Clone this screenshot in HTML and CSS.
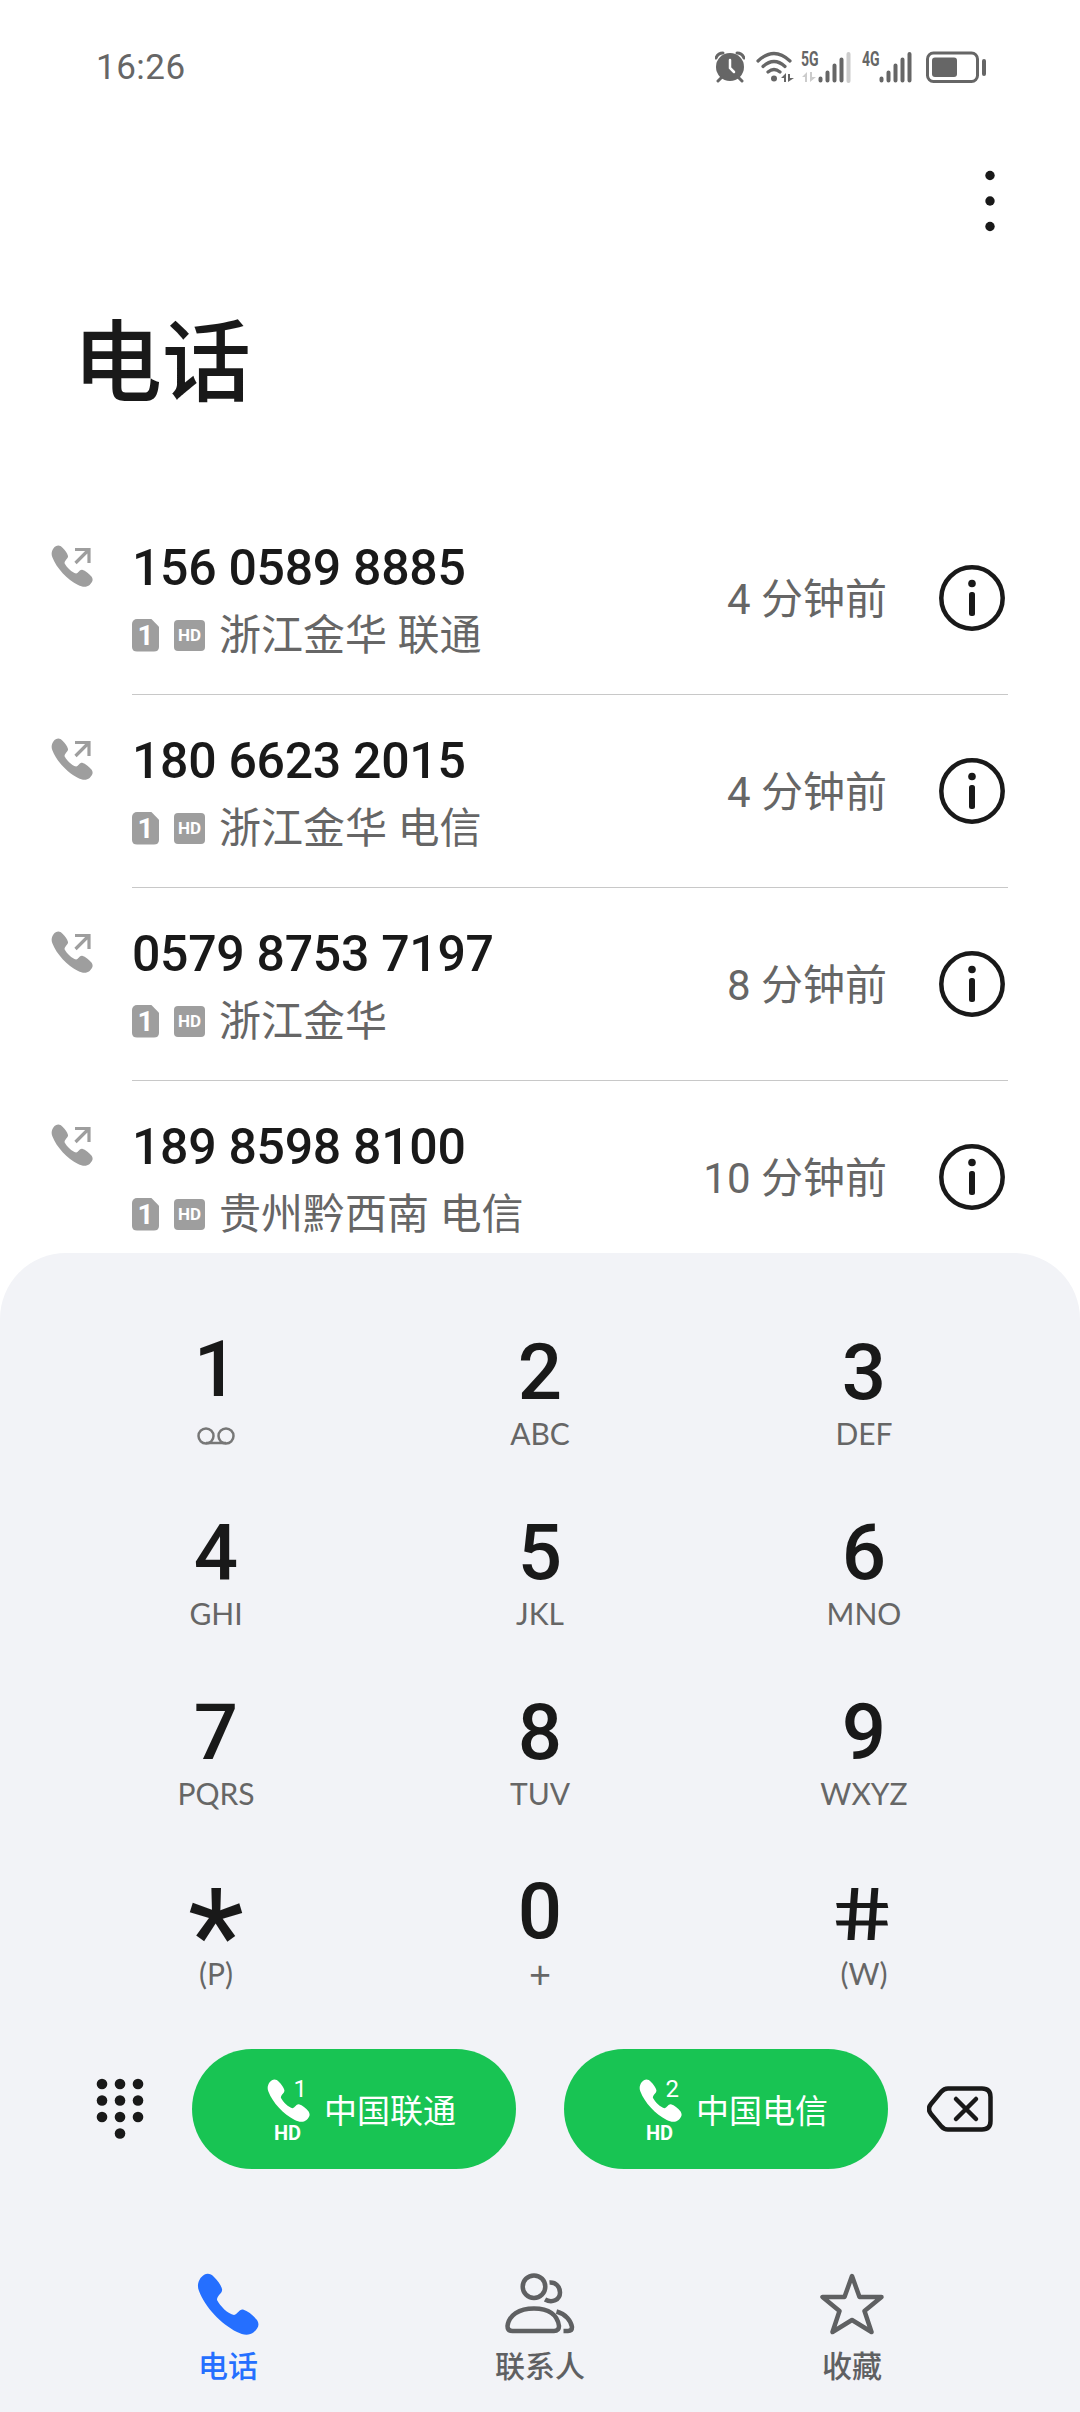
FILE: index.html
```html
<!DOCTYPE html>
<html lang="zh-CN">
<head>
  <meta charset="UTF-8" />
  <meta name="viewport" content="width=device-width, initial-scale=1" />
  <title>电话</title>
  <link rel="stylesheet" href="styles.css">
</head>
<body>
<!-- shared shapes -->
<svg class="defs" width="0" height="0">
  <symbol id="handset" viewBox="0 0 62 62">
    <path d="M3.500 5C8 -0.500 13 -0.500 17 4C21 8 24 12 25 16C26 20 20 22 20 27C23 33 31 41 37 42C41 41 42 36 46 36.500C51 38 56 42 60 47C63 52 61 55 57 59C52 63 46 62 40 59C24 51 8 34 2 18C0 13 1 9 3.500 5Z" />
  </symbol>
  <symbol id="outgoing" viewBox="0 0 42 42">
    <use href="#handset" width="42" height="42" />
    <path d="M24 4.500H38V18M37.500 5L24.500 18" fill="none" stroke="#9e9e9e" stroke-width="3.200" />
  </symbol>
  <symbol id="info" viewBox="0 0 66 66">
    <circle cx="33" cy="33" r="30.700" fill="none" stroke="#191919" stroke-width="4.500" />
    <circle cx="33" cy="18.500" r="3.800" />
    <rect x="30" y="27" width="6" height="24" rx="2.500" />
  </symbol>
</svg>

<header class="status">
  <span class="clock">16:26</span>
  <div class="indicators">
    <svg class="alarm" viewBox="0 0 30 32">
      <circle cx="15" cy="16" r="14" />
      <path d="M7 26L3 30M23 26L27 30" stroke="#666" stroke-width="3" stroke-linecap="round" />
      <path d="M1 7Q3 2 8 2M22 2Q27 2 29 7" fill="none" stroke="#666" stroke-width="3" stroke-linecap="round" />
      <path d="M15 9V17L19 21" fill="none" stroke="#fff" stroke-width="2.500" stroke-linecap="round" />
    </svg>
    <svg class="wifi" viewBox="0 0 38 32">
      <g fill="none" stroke="#666" stroke-width="3.200" stroke-linecap="round">
        <path d="M2 10Q18 -5 34 10M7 15.500Q18 5.500 29 15.500M12 21Q18 16 24 21" />
      </g>
      <circle cx="18" cy="27.500" r="3" />
      <path d="M25 27L30 22V31H28V27ZM32 23H34V27H38L32 31Z" />
    </svg>
    <div class="signal">
      <span>5G</span>
      <svg viewBox="0 0 50 32">
        <path d="M1 26L6 21V31H4V26ZM9 21H11V26H15L9 31Z" fill="#ccc" />
        <path d="M19.500 27.500V29.500M26.500 21.500V29.500M33.500 14.500V29.500M40.500 8.500V29.500" stroke="#666" stroke-width="4" stroke-linecap="round" />
        <path d="M47.500 3V30" stroke="#ccc" stroke-width="4" stroke-linecap="round" />
      </svg>
    </div>
    <div class="signal">
      <span>4G</span>
      <svg viewBox="0 0 50 32">
        <path d="M19.500 27.500V29.500M26.500 21.500V29.500M33.500 14.500V29.500M40.500 8.500V29.500M47.500 3V29.500" stroke="#666" stroke-width="4" stroke-linecap="round" />
      </svg>
    </div>
    <svg class="battery" viewBox="0 0 60 32">
      <rect x="1.500" y="2" width="50" height="28.500" rx="6" fill="none" stroke="#666" stroke-width="3" />
      <rect x="6" y="6.500" width="25" height="19.500" rx="3" />
      <rect x="56" y="8" width="4" height="17" rx="2" />
    </svg>
  </div>
</header>

<div class="toolbar">
  <svg class="more" viewBox="0 0 10 62">
    <circle cx="5" cy="5.500" r="4.700" />
    <circle cx="5" cy="31" r="4.700" />
    <circle cx="5" cy="56.500" r="4.700" />
  </svg>
</div>
<h1>电话</h1>

<ul class="calls">
  <li>
    <svg class="out"><use href="#outgoing" /></svg>
    <div class="entry">
      <div class="who">
        <p class="number">156 0589 8885</p>
        <p class="place"><span class="sim">1</span><span class="hd">HD</span>浙江金华 联通</p>
      </div>
      <span class="ago">4 分钟前</span>
      <svg class="info"><use href="#info" /></svg>
    </div>
  </li>
  <li>
    <svg class="out"><use href="#outgoing" /></svg>
    <div class="entry">
      <div class="who">
        <p class="number">180 6623 2015</p>
        <p class="place"><span class="sim">1</span><span class="hd">HD</span>浙江金华 电信</p>
      </div>
      <span class="ago">4 分钟前</span>
      <svg class="info"><use href="#info" /></svg>
    </div>
  </li>
  <li>
    <svg class="out"><use href="#outgoing" /></svg>
    <div class="entry">
      <div class="who">
        <p class="number">0579 8753 7197</p>
        <p class="place"><span class="sim">1</span><span class="hd">HD</span>浙江金华</p>
      </div>
      <span class="ago">8 分钟前</span>
      <svg class="info"><use href="#info" /></svg>
    </div>
  </li>
  <li>
    <svg class="out"><use href="#outgoing" /></svg>
    <div class="entry">
      <div class="who">
        <p class="number">189 8598 8100</p>
        <p class="place"><span class="sim">1</span><span class="hd">HD</span>贵州黔西南 电信</p>
      </div>
      <span class="ago">10 分钟前</span>
      <svg class="info"><use href="#info" /></svg>
    </div>
  </li>
</ul>

<section class="dialer">
  <div class="keys">
    <div class="key one"><b>1</b>
      <svg class="voicemail" viewBox="0 0 38 18">
        <path d="M9 16H29" />
        <circle cx="9" cy="9" r="7.500" />
        <circle cx="29" cy="9" r="7.500" />
      </svg>
    </div>
    <div class="key"><b>2</b><small>ABC</small></div>
    <div class="key"><b>3</b><small>DEF</small></div>
    <div class="key"><b>4</b><small>GHI</small></div>
    <div class="key"><b>5</b><small>JKL</small></div>
    <div class="key"><b>6</b><small>MNO</small></div>
    <div class="key"><b>7</b><small>PQRS</small></div>
    <div class="key"><b>8</b><small>TUV</small></div>
    <div class="key"><b>9</b><small>WXYZ</small></div>
    <div class="key"><b class="star">*</b><small>(P)</small></div>
    <div class="key zero"><b>0</b><small class="plus">+</small></div>
    <div class="key"><b class="hash">#</b><small>(W)</small></div>
  </div>

  <div class="actions">
    <svg class="grid" viewBox="0 0 48 62">
      <circle cx="6" cy="6" r="5.300" /><circle cx="24" cy="6" r="5.300" /><circle cx="42" cy="6" r="5.300" />
      <circle cx="6" cy="22.500" r="5.300" /><circle cx="24" cy="22.500" r="5.300" /><circle cx="42" cy="22.500" r="5.300" />
      <circle cx="6" cy="39" r="5.300" /><circle cx="24" cy="39" r="5.300" /><circle cx="42" cy="39" r="5.300" />
      <circle cx="24" cy="55.500" r="5.300" />
    </svg>
    <button class="call">
      <span class="line"><svg><use href="#handset" /></svg><sup>1</sup><em>HD</em></span>
      中国联通
    </button>
    <button class="call">
      <span class="line"><svg><use href="#handset" /></svg><sup>2</sup><em>HD</em></span>
      中国电信
    </button>
    <svg class="erase" viewBox="0 0 66 46">
      <path d="M21 2.500H55Q63.500 2.500 63.500 11V35Q63.500 43.500 55 43.500H21Q17 43.500 14 40L4 28Q0 23 4 18L14 6Q17 2.500 21 2.500Z" />
      <path d="M29 13L49 33M49 13L29 33" />
    </svg>
  </div>

  <nav class="tabs">
    <a class="active">
      <svg viewBox="0 0 62 62"><use href="#handset" /></svg>
      电话
    </a>
    <a>
      <svg class="people" viewBox="0 0 70 62">
        <circle cx="29" cy="13.700" r="11.300" />
        <path d="M2.500 53C4 42 14 35.500 29 35.500S52.500 42 54 53Q54 58 49 58H7.500Q2.500 58 2.500 53Z" />
        <g stroke-linecap="butt">
          <path d="M44.500 9.500C51 9 55 14 55 19.500C55 27 47 30.500 40 26.500" />
          <path d="M51.500 38.500C61 41 66 48 67 54Q67 58 63 58H58.500" />
        </g>
      </svg>
      联系人
    </a>
    <a>
      <svg viewBox="0 0 64 62">
        <path class="outline" d="M32 3L39.500 24H61.500L44.500 38L51.500 59L32 47L12.500 59L19.500 38L2.500 24H24.500Z" />
      </svg>
      收藏
    </a>
  </nav>
</section>
</body>
</html>
```

FILE: styles.css
```css
* {
  box-sizing: border-box;
}
body {
  margin: 0;
  width: 1080px;
  height: 2412px;
  overflow: hidden;
  background-color: #fff;
  color: #191919;
  fill: #191919;
  font-family: Roboto, "Noto Sans CJK SC", sans-serif;
}
h1,
p,
ul {
  margin: 0;
  padding: 0;
}
svg {
  display: block;
  flex: none;
}
.defs {
  position: absolute;
}

/* status bar */
.status {
  display: flex;
  justify-content: space-between;
  align-items: center;
  height: 132px;
  padding: 2px 94px 0 96px;
  color: #666;
  fill: #666;
}
.clock {
  font-size: 35px;
  letter-spacing: 0.5px;
}
.indicators {
  display: flex;
  height: 32px;
}
.alarm {
  width: 30px;
  margin-right: 11px;
}
.wifi {
  width: 38px;
  margin-right: 7px;
}
.signal {
  position: relative;
  width: 50px;
  margin-right: 11px;
}
.signal + .battery {
  width: 60px;
  margin-left: 3px;
}
.signal span {
  position: absolute;
  left: 0;
  top: 0;
  font-size: 20px;
  font-weight: 700;
  line-height: 16px;
  transform: scaleX(0.7);
  transform-origin: left;
}

.toolbar {
  display: flex;
  justify-content: flex-end;
  height: 138px;
  padding: 38px 85px 0 0;
}
.more {
  width: 10px;
  height: 62px;
}
h1 {
  height: 232px;
  padding: 32px 0 0 73px;
  font-size: 89px;
  font-weight: 500;
  line-height: 124px;
}

/* recent calls */
.calls {
  height: 751px;
  overflow: hidden;
  list-style: none;
}
.calls li {
  display: flex;
  height: 193px;
  padding: 0 72px 0 51px;
}
.out {
  width: 42px;
  height: 42px;
  margin: 43px 39px 0 0;
  fill: #9e9e9e;
}
.entry {
  display: flex;
  flex: 1;
  align-items: center;
  border-bottom: 1px solid #c8c8c8;
}
.who {
  flex: 1;
  padding-top: 8px;
}
.number {
  font-size: 50px;
  font-weight: 500;
  letter-spacing: -0.3px;
  line-height: 66px;
}
.place {
  display: flex;
  align-items: center;
  color: #666;
  font-size: 42px;
  line-height: 69px;
}
.sim,
.hd {
  background-color: #9e9e9e;
  color: #fff;
  font-weight: 700;
  text-align: center;
}
.sim {
  width: 27px;
  height: 33px;
  margin-right: 15px;
  border-radius: 5px;
  clip-path: polygon(0 0, 70% 0, 100% 25%, 100% 100%, 0 100%);
  font-size: 28px;
  line-height: 34px;
}
.hd {
  width: 31px;
  height: 31px;
  margin-right: 14px;
  border-radius: 4px;
  font-size: 17px;
  line-height: 31px;
}
.ago {
  margin: -5px 52px 0 0;
  color: #666;
  font-size: 42px;
}
.info {
  width: 66px;
  height: 66px;
  margin-right: 3px;
}

/* dialer */
.dialer {
  height: 1159px;
  padding-top: 56px;
  border-radius: 66px 66px 0 0;
  background-color: #f2f3f7;
}
.keys {
  display: grid;
  grid-template-columns: repeat(3, 324px);
  grid-auto-rows: 180px;
  justify-content: center;
}
.key {
  display: flex;
  flex-direction: column;
  align-items: center;
}
.key b {
  height: 108px;
  font-size: 78px;
  font-weight: 500;
  line-height: 128px;
}
.one b {
  line-height: 122px;
}
.zero b {
  line-height: 125px;
}
.key small {
  color: #666;
  font-family: Lato, sans-serif;
  font-size: 30px;
  line-height: 33px;
}
.key .plus {
  font-size: 38px;
  line-height: 32px;
}
.key .star {
  font-size: 130px;
  font-weight: 400;
  line-height: 176px;
}
.key .hash {
  font-size: 73px;
  font-weight: 400;
  line-height: 133px;
  transform: translateX(-7px) scaleX(1.38) skewX(8deg);
}
.voicemail {
  width: 38px;
  height: 18px;
  margin-top: 10px;
  fill: none;
  stroke: #777;
  stroke-width: 2.5;
}

.actions {
  display: flex;
  align-items: center;
  height: 120px;
  margin-top: 20px;
  padding-left: 96px;
}
.grid {
  width: 48px;
  height: 62px;
  margin-right: 48px;
}
.call {
  display: flex;
  align-items: center;
  width: 324px;
  height: 120px;
  margin-right: 48px;
  padding: 0 0 0 75px;
  border: 0;
  border-radius: 60px;
  background-color: #18c453;
  color: #fff;
  font-family: inherit;
  font-size: 33px;
}
.call + .erase {
  margin-left: -9px;
}
.line {
  position: relative;
  width: 43px;
  height: 60px;
  margin-right: 14px;
  fill: #fff;
}
.line svg {
  width: 43px;
  height: 43px;
}
.line sup {
  position: absolute;
  right: 3px;
  top: 0;
  font-size: 24px;
  line-height: 20px;
}
.line em {
  position: absolute;
  left: 7px;
  bottom: -3px;
  font-size: 20px;
  font-style: normal;
  font-weight: 700;
  line-height: 18px;
}
.erase {
  width: 66px;
  height: 46px;
  fill: none;
  stroke: #191919;
  stroke-width: 4.5;
  stroke-linecap: round;
}

.tabs {
  display: flex;
  padding: 104px 72px 0;
}
.tabs a {
  display: flex;
  flex: 1;
  flex-direction: column;
  align-items: center;
  color: #5f6062;
  font-size: 30px;
  font-weight: 500;
  line-height: 44px;
}
.tabs svg {
  height: 62px;
  margin-bottom: 10px;
}
.tabs .active {
  color: #256fff;
  fill: #256fff;
}
.people,
.outline {
  fill: none;
  stroke: #5f6062;
  stroke-width: 4.5;
  stroke-linecap: round;
  stroke-linejoin: round;
}
```
